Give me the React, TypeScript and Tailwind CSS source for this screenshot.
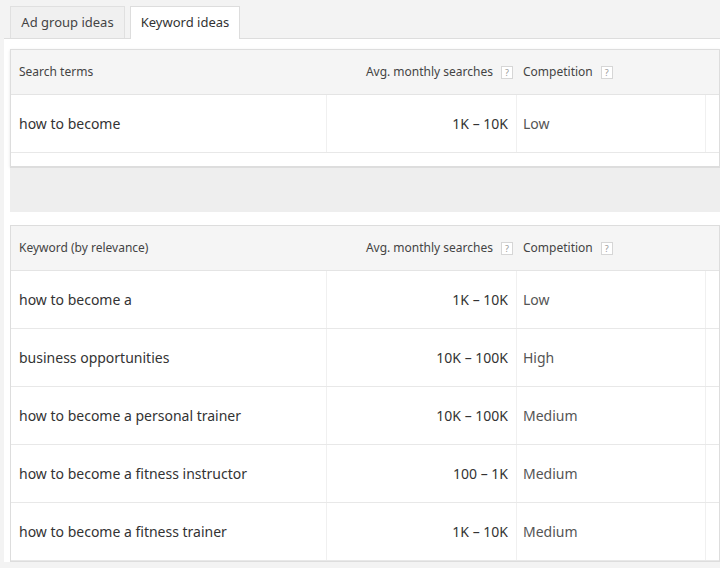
const ROWS = [
  ['how to become a', '1K – 10K', 'Low'],
  ['business opportunities', '10K – 100K', 'High'],
  ['how to become a personal trainer', '10K – 100K', 'Medium'],
  ['how to become a fitness instructor', '100 – 1K', 'Medium'],
  ['how to become a fitness trainer', '1K – 10K', 'Medium'],
]

const COLS = 'grid grid-cols-[316px_190px_189px_1fr]'

function Help() {
  return (
    <span className="ml-2 inline-flex h-[13px] w-[12px] items-center justify-center border border-[#d6d6d6] bg-white text-[9px] leading-none text-[#999]">?</span>
  )
}

function Header({ first }: { first: string }) {
  return (
    <div className={`${COLS} h-[45px] items-center bg-[#f5f5f5] text-[12px] text-[#444] border-b border-[#e4e4e4]`}>
      <div className="pl-2">{first}</div>
      <div className="flex items-center justify-end pr-1">Avg. monthly searches<Help /></div>
      <div className="flex items-center pl-1.5">Competition<Help /></div>
      <div />
    </div>
  )
}

function Row({ r }: { r: string[] }) {
  return (
    <div className={`${COLS} h-[58px] items-stretch border-b border-[#e8e8e8] text-[14px]`}>
      <div className="flex items-center pl-2 text-[#333] border-r border-[#f0f0f0]">{r[0]}</div>
      <div className="flex items-center justify-end pr-2 text-[#333] border-r border-[#f0f0f0]">{r[1]}</div>
      <div className="flex items-center pl-1.5 text-[#555] border-r border-[#f0f0f0]">{r[2]}</div>
      <div />
    </div>
  )
}

export default function App() {
  return (
    <div className="h-[568px] w-[720px] overflow-hidden bg-[#f3f3f3] [font-family:'Liberation_Sans',Arial,sans-serif]">
      <div className="flex h-[38px] items-end gap-[5px] pl-[10px]">
        <div className="flex h-[32px] w-[115px] items-center justify-center border border-b-0 border-[#e0e0e0] bg-[#f0f0f0] text-[13px] text-[#444]">Ad group ideas</div>
        <div className="relative -mb-px flex h-[33px] w-[110px] items-center justify-center border border-b-0 border-[#ddd] bg-white text-[13px] text-[#333]">Keyword ideas</div>
      </div>
      <div className="ml-[4px] border-t border-[#ddd] bg-white pt-[10px]">
        <div className="ml-[6px] border border-[#ddd] shadow-sm">
          <Header first="Search terms" />
          <Row r={['how to become', '1K – 10K', 'Low']} />
          <div className="h-[13px]" />
        </div>
        <div className="ml-[6px] h-[45px] bg-[#eeeeee] border-t border-[#ddd]" />
        <div className="h-[13px]" />
        <div className="ml-[6px] border border-[#ddd]">
          <Header first="Keyword (by relevance)" />
          {ROWS.map((r) => <Row key={r[0]} r={r} />)}
        </div>
      </div>
    </div>
  )
}
